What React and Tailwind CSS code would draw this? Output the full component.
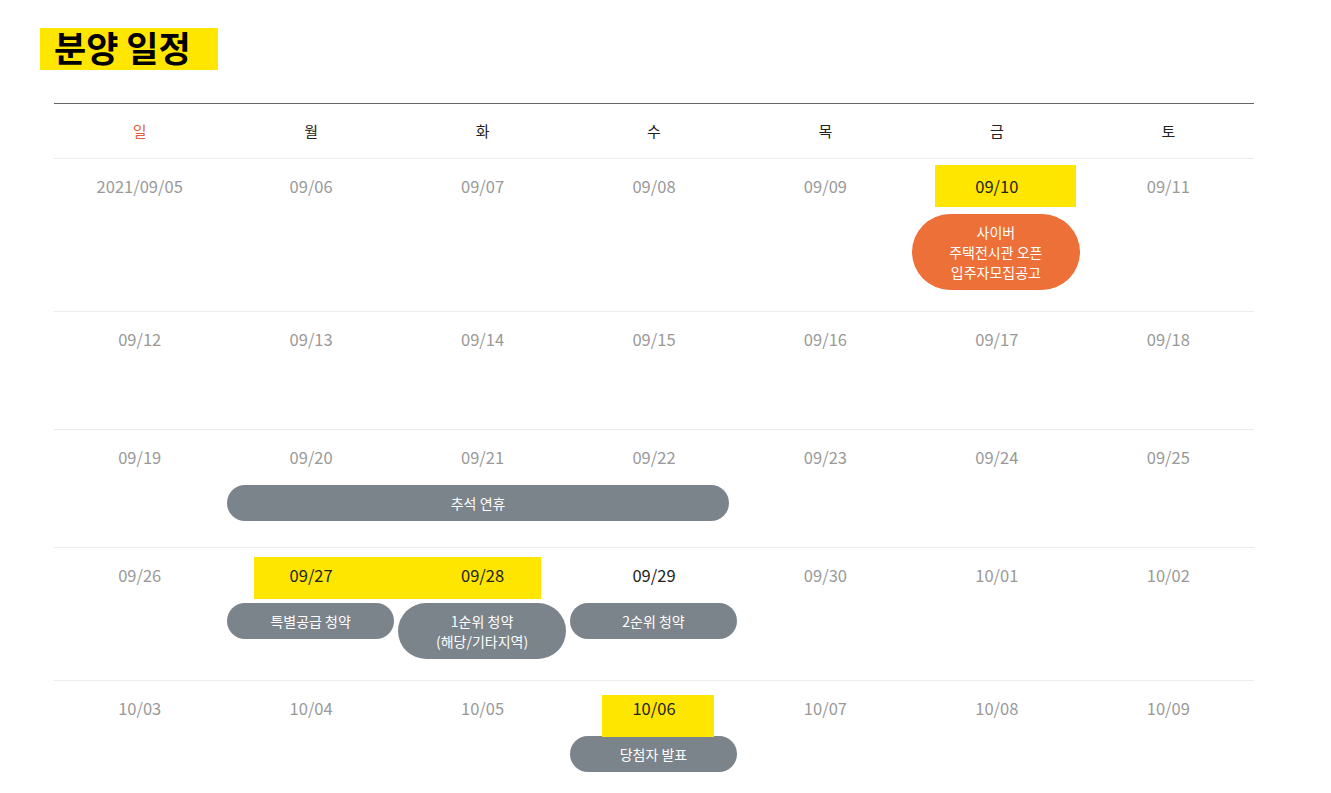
const DAYS = ['일', '월', '화', '수', '목', '금', '토']

// hl: yellow box behind the date, left/right inset inside the cell
const WEEKS = [
  {
    h: 'min-h-[153px]',
    dates: [
      { d: '2021/09/05' },
      { d: '09/06' },
      { d: '09/07' },
      { d: '09/08' },
      { d: '09/09' },
      { d: '09/10', hl: 'left-[24px] right-[7px] top-[6px] h-[42px]' },
      { d: '09/11' },
    ],
    events: [
      { col: 'col-start-6 col-span-1', lines: ['사이버', '주택전시관 오픈', '입주자모집공고'], color: 'bg-[#ed7038]', mx: 'ml-[1px] mr-[3px]' },
    ],
  },
  {
    h: 'min-h-[118px]',
    dates: ['09/12', '09/13', '09/14', '09/15', '09/16', '09/17', '09/18'].map((d) => ({ d })),
    events: [],
  },
  {
    h: 'min-h-[118px]',
    dates: ['09/19', '09/20', '09/21', '09/22', '09/23', '09/24', '09/25'].map((d) => ({ d })),
    events: [
      { col: 'col-start-2 col-span-3', lines: ['추석 연휴'], color: 'bg-[#7b838b]', mx: 'ml-[2px] mr-[11px]' },
    ],
  },
  {
    h: 'min-h-[133px]',
    dates: [
      { d: '09/26' },
      { d: '09/27', hl: 'left-[29px] right-0 top-[9px] h-[42px]' },
      { d: '09/28', hl: 'left-0 right-[27px] top-[9px] h-[42px]' },
      { d: '09/29', dark: true },
      { d: '09/30' },
      { d: '10/01' },
      { d: '10/02' },
    ],
    events: [
      { col: 'col-start-2 col-span-1', lines: ['특별공급 청약'], color: 'bg-[#7b838b]', mx: 'ml-[2px] mr-[3px]' },
      { col: 'col-start-3 col-span-1', lines: ['1순위 청약', '(해당/기타지역)'], color: 'bg-[#7b838b]', mx: 'ml-[1px] mr-[2px]' },
      { col: 'col-start-4 col-span-1', lines: ['2순위 청약'], color: 'bg-[#7b838b]', mx: 'ml-[2px] mr-[3px]' },
    ],
  },
  {
    h: 'min-h-[113px]',
    dates: [
      { d: '10/03' },
      { d: '10/04' },
      { d: '10/05' },
      { d: '10/06', hl: 'left-[34px] right-[26px] top-[14px] h-[42px]' },
      { d: '10/07' },
      { d: '10/08' },
      { d: '10/09' },
    ],
    events: [
      { col: 'col-start-4 col-span-1', lines: ['당첨자 발표'], color: 'bg-[#7b838b]', mx: 'ml-[2px] mr-[3px]' },
    ],
    last: true,
  },
]

function DateCell({ item }) {
  const strong = item.hl || item.dark
  return (
    <div className="relative flex h-[55px] items-center justify-center">
      {item.hl && <div className={`absolute bg-[#ffe600] ${item.hl}`} />}
      <span className={`relative text-[16.5px] ${strong ? 'text-[#222]' : 'text-[#999]'}`}>{item.d}</span>
    </div>
  )
}

function Week({ week }) {
  return (
    <div className={`${week.h} ${week.last ? '' : 'border-b border-[#ececec]'}`}>
      <div className="grid grid-cols-7">
        {week.dates.map((item) => (
          <DateCell key={item.d} item={item} />
        ))}
        {week.events.map((ev) => (
          <div key={ev.lines[0]} className={`${ev.col} row-start-2 flex items-start`}>
            <div
              className={`${ev.color} ${ev.mx} flex-1 rounded-full py-[8px] text-center text-[14px] leading-[20px] text-white`}
            >
              {ev.lines.map((l) => (
                <div key={l}>{l}</div>
              ))}
            </div>
          </div>
        ))}
      </div>
    </div>
  )
}

export default function App() {
  return (
    <div className="min-h-[793px] bg-white pl-[54px] pt-[28px] font-['Noto_Sans_CJK_KR','Liberation_Sans',sans-serif]">
      <div className="-ml-[14px] inline-flex h-[42px] items-start bg-[#ffe600] pl-[14px] pr-[27px]">
        <h1 className="-mt-[5px] text-[35px] font-bold leading-[48px] text-black">분양 일정</h1>
      </div>

      <div className="mt-[33px] w-[1200px] border-t border-[#666]">
        <div className="grid h-[55px] grid-cols-7 border-b border-[#ececec]">
          {DAYS.map((d, i) => (
            <div
              key={d}
              className={`flex items-center justify-center text-[15px] ${i === 0 ? 'text-[#e0643c]' : 'text-[#222]'}`}
            >
              {d}
            </div>
          ))}
        </div>
        {WEEKS.map((w, i) => (
          <Week key={i} week={w} />
        ))}
      </div>
    </div>
  )
}
